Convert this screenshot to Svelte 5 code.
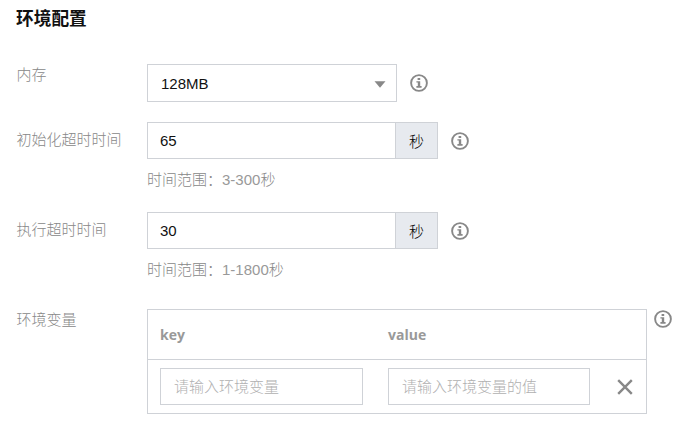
<script>
  const timeouts = [
    { label: '初始化超时时间', value: '65', range: '3-300' },
    { label: '执行超时时间', value: '30', range: '1-1800' }
  ];
</script>

{#snippet info()}
  <svg class="info" viewBox="0 0 18 18" aria-hidden="true">
    <circle cx="9" cy="9" r="7.9" fill="none" stroke="#888" stroke-width="1.9" />
    <path d="M7.6 4h2.6v2.1H7.6zM6.4 7.2h3.8v4.9h1.4v1.6H6.4v-1.6h1.4V8.6H6.4z" fill="#888" />
  </svg>
{/snippet}

<main>
  <h2>环境配置</h2>

  <div class="row memory">
    <span class="label">内存</span>
    <div class="control">
      <div class="select">
        <span>128MB</span>
        <svg width="12" height="7" viewBox="0 0 12 7"><path d="M.5 .3h11L6 6.7z" fill="#888" /></svg>
      </div>
      {@render info()}
    </div>
  </div>

  {#each timeouts as item}
    <div class="row timeout">
      <span class="label">{item.label}</span>
      <div>
        <div class="control">
          <div class="field">{item.value}</div>
          <div class="unit">秒</div>
          {@render info()}
        </div>
        <p>时间范围：<span class="range">{item.range}</span>秒</p>
      </div>
    </div>
  {/each}

  <div class="row env">
    <span class="label">环境变量</span>
    <div class="table">
      <div class="line head"><span>key</span><span>value</span></div>
      <div class="line body">
        <div class="entry first">请输入环境变量</div>
        <div class="entry second">请输入环境变量的值</div>
        <svg class="close" viewBox="0 0 16 16"><path d="M1.2 1.2l13.6 13.6M14.8 1.2L1.2 14.8" stroke="#888" stroke-width="2.4" /></svg>
      </div>
    </div>
    {@render info()}
  </div>
</main>

<style>
  :global(body) { background: #fff; }
  main {
    box-sizing: border-box;
    width: 685px;
    height: 435px;
    padding: 7px 0 0 16px;
    overflow: hidden;
    font: 15px/22px "Liberation Sans", "Noto Sans CJK SC", sans-serif;
    color: #111;
  }
  h2 { margin: 0 0 33px; font-size: 17.7px; line-height: 24px; font-weight: 700; }
  .row { display: flex; align-items: flex-start; }
  .label { box-sizing: border-box; width: 131px; padding-left: 0.5px; flex: none; color: #888; font-weight: 300; }
  .memory { height: 58px; }
  .timeout { height: 90px; }
  .timeout .label { padding-top: 7px; }
  .control { display: flex; align-items: center; }
  .select, .field, .unit, .entry, .table { box-sizing: border-box; border: 1px solid #cfd2d7; }
  .select {
    display: flex;
    align-items: center;
    justify-content: space-between;
    width: 250px;
    height: 38px;
    padding: 2px 10px 0 13px;
  }
  .field { width: 249px; height: 37px; padding: 7px 12px; }
  .unit {
    width: 43px;
    height: 37px;
    margin-left: -1px;
    background: #e7eaef;
    text-align: center;
    line-height: 37px;
    font-weight: 300;
    color: #000;
  }
  .info { width: 18px; height: 18px; margin-left: 13px; flex: none; }
  p { margin: 10px 0 0; color: #888; font-weight: 300; }
  .range { color: #999; }
  .env { padding-top: 7px; }
  .table { width: 500px; height: 105px; }
  .env .info { margin: 1px 0 0 7px; }
  .line { display: flex; align-items: center; padding-left: 12px; }
  .head { height: 49px; border-bottom: 1px solid #cfd2d7; font: 700 14px "Open Sans", sans-serif; color: #999; }
  .head span { width: 228px; }
  .body { height: 53px; }
  .entry { height: 37px; padding: 7px 13px; color: #b0b0b0; font-weight: 300; }
  .first { width: 203px; margin-right: 25px; }
  .second { width: 202px; margin-right: 27px; }
  .close { width: 16px; height: 16px; }
</style>
